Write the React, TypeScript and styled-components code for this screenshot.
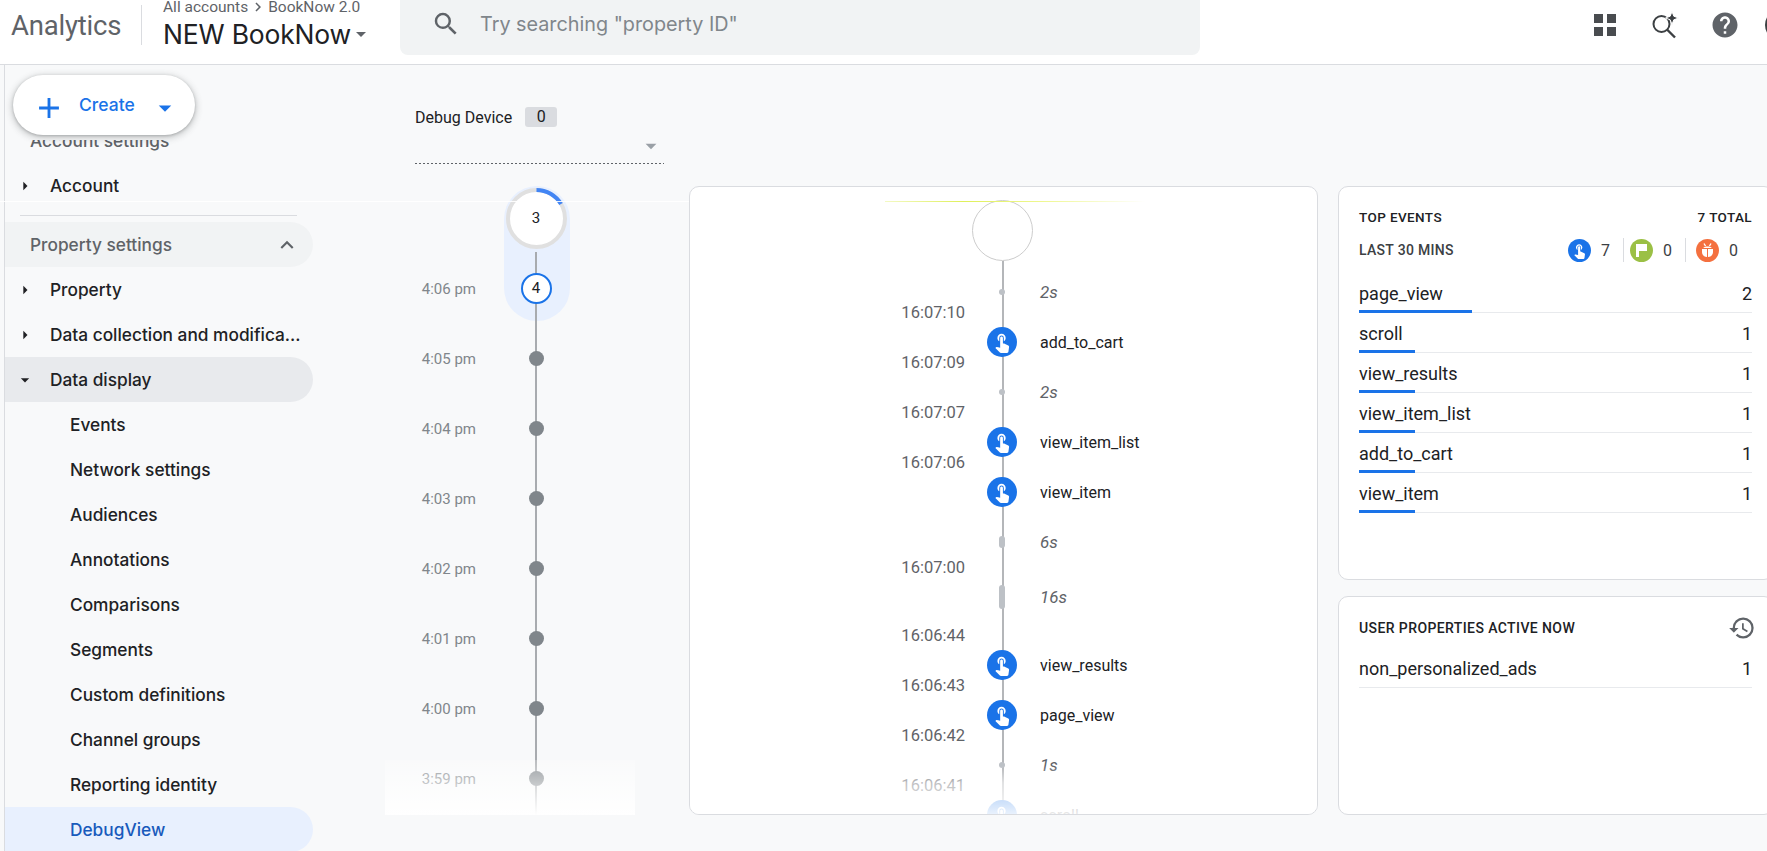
import styled, { createGlobalStyle } from 'styled-components'
import {
    MdAdd,
    MdArrowDropDown,
    MdArrowRight,
    MdChevronRight,
    MdExpandLess,
    MdHelp,
    MdHistory,
    MdSearch,
    MdTouchApp,
} from 'react-icons/md'

const GlobalStyle = createGlobalStyle`
    html, body {
        margin: 0;
        height: 100%;
        overflow: hidden;
        background: #f8f9fa;
        font-family: Roboto, "Liberation Sans", sans-serif;
        color: #202124;
    }
`

const Page = styled.div`
    position: relative;
    width: 1767px;
    height: 851px;
    overflow: hidden;
    background: #f8f9fa;
`

const Header = styled.header`
    display: flex;
    height: 64px;
    background: #fff;
    border-bottom: 1px solid #dadce0;
`

const Product = styled.div`
    width: 130px;
    padding-left: 11px;
    flex-shrink: 0;
    font-size: 27.5px;
    line-height: 52px;
    letter-spacing: -0.2px;
    color: #5f6368;
`

const HeaderDivider = styled.div`
    width: 1px;
    height: 40px;
    margin: 5px 21px 0 0;
    flex-shrink: 0;
    background: #dadce0;
`

const AccountBlock = styled.div`
    width: 237px;
    flex-shrink: 0;
`

const Crumbs = styled.div`
    display: flex;
    align-items: center;
    gap: 1px;
    height: 14px;
    font-size: 15.5px;
    line-height: 14px;
    color: #5f6368;
`

const PropertyName = styled.div`
    display: flex;
    align-items: center;
    margin-top: 5px;
    font-family: Inter, Roboto, sans-serif;
    font-size: 26.5px;
    line-height: 30px;
    letter-spacing: -0.2px;
    color: #202124;
`

const PropertyCaret = styled.span`
    display: flex;
    margin-left: -2px;
    color: #5f6368;
`

const SearchBox = styled.div`
    display: flex;
    align-items: center;
    gap: 19px;
    width: 800px;
    height: 55px;
    padding: 0 0 7px 31px;
    box-sizing: border-box;
    flex-shrink: 0;
    background: #f1f3f4;
    border-radius: 0 0 8px 8px;
    font-family: Inter, Roboto, sans-serif;
    font-size: 19.8px;
    color: #80868b;
`

const Actions = styled.div`
    display: flex;
    align-items: center;
    height: 50px;
    margin-left: 375px;
    flex-shrink: 0;
    color: #5f6368;
`

const ActionSlot = styled.span`
    display: flex;
    justify-content: center;
    width: 60px;
`

const Avatar = styled.div`
    width: 26px;
    height: 26px;
    margin-left: 10px;
    flex-shrink: 0;
    border: 3px solid #3c4043;
    border-radius: 50%;
`

const Body = styled.div`
    display: flex;
    height: 786px;
`

const Sidebar = styled.aside`
    position: relative;
    width: 315px;
    margin-left: 4px;
    flex-shrink: 0;
    border-left: 1px solid #dadce0;
`

const CreateArea = styled.div`
    height: 75px;
`

const CreateButton = styled.button`
    position: absolute;
    top: 10px;
    left: 8px;
    display: flex;
    align-items: center;
    width: 182px;
    height: 60px;
    padding: 0 0 0 19px;
    border: 0;
    border-radius: 30px;
    background: #fff;
    box-shadow: 0 2px 6px 2px rgba(60, 64, 67, 0.2), 0 1px 3px rgba(60, 64, 67, 0.3);
    font-family: Inter, Roboto, sans-serif;
    font-size: 17.5px;
    font-weight: 500;
    color: #1a73e8;
    z-index: 3;
`

const CreateLabel = styled.span`
    margin: -1px 15px 0 13px;
`

const CreateIcon = styled.span`
    display: flex;
    margin-top: 6px;
`

const NavScroll = styled.div`
    height: 711px;
    overflow: hidden;
`

const NavList = styled.div`
    margin-top: -22px;
`

const NavRow = styled.div<{ $tone?: 'section' | 'open' | 'active'; $indent: number; $muted?: boolean }>`
    display: flex;
    align-items: center;
    height: 45px;
    width: 308px;
    box-sizing: border-box;
    padding-left: ${(p) => p.$indent}px;
    border-radius: 0 23px 23px 0;
    font-family: Inter, Roboto, sans-serif;
    font-size: 17.3px;
    font-weight: 500;
    white-space: nowrap;
    color: ${(p) => (p.$tone === 'active' ? '#185abc' : p.$muted ? '#5f6368' : '#202124')};
    background: ${(p) =>
        p.$tone === 'section' ? '#f1f3f4' : p.$tone === 'open' ? '#e8eaed' : p.$tone === 'active' ? '#e8f0fe' : 'transparent'};
`

const NavCaret = styled.span`
    display: flex;
    width: 20px;
    margin: 0 15px 0 -1px;
    color: #202124;
`

const NavEnd = styled.span`
    display: flex;
    margin-left: auto;
    margin-right: 13px;
    color: #5f6368;
`

const NavDivider = styled.div`
    height: 1px;
    width: 277px;
    margin: 7px 0 6px 15px;
    background: #dadce0;
`

const Main = styled.main`
    display: flex;
    gap: 20px;
    flex: 1;
    min-width: 0;
`

const LeftColumn = styled.div`
    width: 284px;
    padding-left: 65px;
    flex-shrink: 0;
`

const DeviceBlock = styled.div`
    width: 249px;
    margin: 42px 0 19px 30px;
`

const DeviceLabel = styled.div`
    display: flex;
    align-items: center;
    gap: 13px;
    height: 20px;
    font-size: 16px;
`

const DeviceCount = styled.span`
    width: 32px;
    height: 20px;
    border-radius: 3px;
    background: #dadce0;
    text-align: center;
    line-height: 20px;
`

const DeviceSelect = styled.div`
    display: flex;
    justify-content: flex-end;
    align-items: center;
    height: 37px;
    padding-right: 0;
    color: #9aa0a6;
    background: repeating-linear-gradient(90deg, #5f6368 0 2px, transparent 2px 4px) bottom / 100% 1px no-repeat;
`

const Minutes = styled.div`
    position: relative;
    width: 250px;
    height: 632px;
    overflow: hidden;
`

const MinutePill = styled.div`
    position: absolute;
    top: 3px;
    left: 119px;
    width: 66px;
    height: 135px;
    border-radius: 33px;
    background: #e8f0fe;
`

const MinuteLine = styled.div`
    position: absolute;
    top: 69px;
    bottom: 0;
    left: 150px;
    width: 2px;
    background: #a8abaf;
`

const MinuteRow = styled.div`
    position: relative;
    display: grid;
    grid-template-columns: 91px 120px;
    align-items: center;
    height: 70px;
`

const MinuteLabel = styled.span`
    margin-top: 2px;
    text-align: right;
    font-size: 15px;
    color: #80868b;
`

const MinuteCell = styled.span`
    display: flex;
    justify-content: center;
`

const CurrentCircle = styled.span`
    display: flex;
    align-items: center;
    justify-content: center;
    position: relative;
    width: 61px;
    height: 61px;
    box-sizing: border-box;
    border: 4px solid #e0e0e0;
    border-radius: 50%;
    background: #fff;
    font-size: 15px;
`

const CircleProgress = styled.svg`
    position: absolute;
    top: -4px;
    left: -4px;
`

const CountCircle = styled.span`
    display: flex;
    align-items: center;
    justify-content: center;
    width: 31px;
    height: 31px;
    box-sizing: border-box;
    border: 2.5px solid #1a73e8;
    border-radius: 50%;
    background: #fff;
    font-size: 15px;
`

const MinuteDot = styled.span`
    width: 15px;
    height: 15px;
    border-radius: 50%;
    background: #80868b;
`

const MinuteFade = styled.div`
    position: absolute;
    left: 0;
    right: 0;
    bottom: 0;
    height: 55px;
    background: linear-gradient(rgba(255, 255, 255, 0.2), #fff 100%);
`

const StreamCard = styled.section`
    position: relative;
    width: 629px;
    height: 629px;
    margin-top: 121px;
    box-sizing: border-box;
    padding-top: 13px;
    flex-shrink: 0;
    overflow: hidden;
    background: #fff;
    border: 1px solid #dadce0;
    border-radius: 10px;
`

const StreamLine = styled.div`
    position: absolute;
    top: 74px;
    bottom: 0;
    left: 312px;
    width: 2px;
    background: #b4b6b9;
`

const StreamHead = styled.div`
    position: relative;
    width: 59px;
    height: 59px;
    margin-left: 282px;
    margin-bottom: 21px;
    border: 1px solid #ccc;
    border-radius: 50%;
    background: #fff;
`

const StreamRow = styled.div<{ $pitch: number }>`
    position: relative;
    display: grid;
    grid-template-columns: 275px 74px 1fr;
    height: ${(p) => p.$pitch}px;
`

const StreamCell = styled.div`
    display: flex;
    align-items: center;
    height: 20px;
`

const StreamTime = styled(StreamCell)`
    justify-content: flex-end;
    font-size: 16.5px;
    color: #5f6368;
`

const StreamCenter = styled(StreamCell)`
    justify-content: center;
`

const EventName = styled(StreamCell)`
    padding-left: 1px;
    font-size: 16px;
    color: #202124;
`

const GapText = styled(StreamCell)`
    padding-left: 1px;
    font-size: 17px;
    font-style: italic;
    color: #5f6368;
`

const GapMark = styled.span<{ $height: number }>`
    width: ${(p) => (p.$height > 6 ? 6 : 6)}px;
    height: ${(p) => p.$height}px;
    border-radius: 3px;
    background: #bdc1c6;
`

const EventBadge = styled.span`
    display: flex;
    align-items: center;
    justify-content: center;
    flex-shrink: 0;
    width: 30px;
    height: 30px;
    border-radius: 50%;
    background: #1a73e8;
    color: #fff;
`

const StreamFade = styled.div`
    position: absolute;
    left: 0;
    right: 0;
    bottom: 0;
    height: 48px;
    background: linear-gradient(rgba(255, 255, 255, 0), rgba(255, 255, 255, 0.6) 35%, rgba(255, 255, 255, 0.9));
`

const RightColumn = styled.div`
    display: flex;
    flex-direction: column;
    gap: 16px;
    width: 436px;
    margin-top: 121px;
    flex-shrink: 0;
`

const InfoCard = styled.section<{ $height: number; $top: number }>`
    height: ${(p) => p.$height}px;
    box-sizing: border-box;
    padding: ${(p) => p.$top}px 21px 0 20px;
    background: #fff;
    border: 1px solid #dadce0;
    border-radius: 10px;
`

const CardTitleRow = styled.div<{ $size: number }>`
    display: flex;
    justify-content: space-between;
    align-items: center;
    height: 20px;
    font-size: ${(p) => p.$size}px;
    font-weight: 500;
    letter-spacing: 0.4px;
    color: #202124;
`

const HistoryIcon = styled.span`
    display: flex;
    margin-right: -4px;
    color: #5f6368;
`

const SummaryRow = styled.div`
    display: flex;
    align-items: center;
    height: 30px;
    margin: 8px 0 9px;
    font-size: 14px;
    font-weight: 500;
    letter-spacing: 0.3px;
    color: #3c4043;
`

const Metrics = styled.div`
    display: flex;
    align-items: center;
    margin-left: auto;
    margin-right: 14px;
    font-size: 16px;
    font-weight: 400;
    letter-spacing: 0;
`

const Metric = styled.div<{ $left: number; $divider?: boolean }>`
    display: flex;
    align-items: center;
    gap: 10px;
    height: 24px;
    padding-left: ${(p) => p.$left}px;
    padding-right: ${(p) => (p.$divider ? 13 : 0)}px;
    border-right: ${(p) => (p.$divider ? '1px solid #dadce0' : 'none')};
`

const MetricBadge = styled.span<{ $bg: string }>`
    display: flex;
    align-items: center;
    justify-content: center;
    width: 23px;
    height: 23px;
    border-radius: 50%;
    background: ${(p) => p.$bg};
    color: #fff;
`

const StatRow = styled.div<{ $top?: number }>`
    position: relative;
    display: flex;
    justify-content: space-between;
    align-items: center;
    height: 39px;
    margin-top: ${(p) => p.$top ?? 0}px;
    margin-bottom: 1px;
    padding-top: 1px;
    box-sizing: border-box;
    border-bottom: 1px solid #e8eaed;
    font-size: 18px;
`

const StatBar = styled.span<{ $width: number }>`
    position: absolute;
    left: 0;
    bottom: -1px;
    width: ${(p) => p.$width}px;
    height: 3px;
    background: #1a73e8;
`

const ScanLine = styled.div`
    position: absolute;
    top: 201px;
    left: 0;
    width: 689px;
    height: 1px;
    background: rgba(255, 255, 255, 0.9);
    z-index: 4;
`

const GlitchLine = styled.div`
    position: absolute;
    top: 201px;
    left: 885px;
    width: 260px;
    height: 1px;
    background: linear-gradient(90deg, #f3f9c4, #dff05a 30%, #eef78f 60%, #fff);
    z-index: 4;
`

const TIMES = ['4:05 pm', '4:04 pm', '4:03 pm', '4:02 pm', '4:01 pm', '4:00 pm', '3:59 pm']

type StreamEntry =
    | { kind: 'gap'; label: string; mark: number; pitch: number }
    | { kind: 'time'; label: string; pitch: number }
    | { kind: 'event'; label: string; pitch: number }

const STREAM: StreamEntry[] = [
    { kind: 'gap', label: '2s', mark: 6, pitch: 20 },
    { kind: 'time', label: '16:07:10', pitch: 30 },
    { kind: 'event', label: 'add_to_cart', pitch: 20 },
    { kind: 'time', label: '16:07:09', pitch: 30 },
    { kind: 'gap', label: '2s', mark: 6, pitch: 20 },
    { kind: 'time', label: '16:07:07', pitch: 30 },
    { kind: 'event', label: 'view_item_list', pitch: 20 },
    { kind: 'time', label: '16:07:06', pitch: 30 },
    { kind: 'event', label: 'view_item', pitch: 50 },
    { kind: 'gap', label: '6s', mark: 12, pitch: 25 },
    { kind: 'time', label: '16:07:00', pitch: 30 },
    { kind: 'gap', label: '16s', mark: 24, pitch: 38 },
    { kind: 'time', label: '16:06:44', pitch: 30 },
    { kind: 'event', label: 'view_results', pitch: 20 },
    { kind: 'time', label: '16:06:43', pitch: 30 },
    { kind: 'event', label: 'page_view', pitch: 20 },
    { kind: 'time', label: '16:06:42', pitch: 30 },
    { kind: 'gap', label: '1s', mark: 6, pitch: 20 },
    { kind: 'time', label: '16:06:41', pitch: 30 },
    { kind: 'event', label: 'scroll', pitch: 20 },
]

const TOP_EVENTS = [
    { name: 'page_view', count: 2, bar: 113 },
    { name: 'scroll', count: 1, bar: 56 },
    { name: 'view_results', count: 1, bar: 56 },
    { name: 'view_item_list', count: 1, bar: 56 },
    { name: 'add_to_cart', count: 1, bar: 56 },
    { name: 'view_item', count: 1, bar: 56 },
]

const SUB_ITEMS = [
    'Events',
    'Network settings',
    'Audiences',
    'Annotations',
    'Comparisons',
    'Segments',
    'Custom definitions',
    'Channel groups',
    'Reporting identity',
]

function AppsIcon() {
    return (
        <svg width="24" height="24" viewBox="0 0 24 24" fill="#494c50">
            <rect x="1" y="1" width="9" height="9" />
            <rect x="14" y="1" width="9" height="9" />
            <rect x="1" y="14" width="9" height="9" />
            <rect x="14" y="14" width="9" height="9" />
        </svg>
    )
}

function SparkleSearchIcon() {
    return (
        <svg width="28" height="28" viewBox="0 0 28 28" fill="none">
            <circle cx="10.500" cy="13" r="8" stroke="#3c4043" strokeWidth="2" />
            <path d="M16 18.500 L24 26.500" stroke="#3c4043" strokeWidth="2.400" />
            <path d="M21 0.500 l1.800 4.700 4.700 1.800 -4.700 1.800 -1.800 4.700 -1.800 -4.700 -4.700 -1.800 4.700 -1.800z" fill="#3c4043" stroke="#fff" strokeWidth="1" />
        </svg>
    )
}

function FlagIcon() {
    return (
        <svg width="15" height="15" viewBox="0 0 15 15" fill="#fff">
            <path d="M2 1h11v7H5v6H2z" />
        </svg>
    )
}

function BugIcon() {
    return (
        <svg width="17" height="17" viewBox="0 0 17 17" fill="none">
            <path d="M3 7h5v8C5 15 3 12.500 3 10zM9 7h5v3c0 2.500-2 5-5 5z" fill="#fff" />
            <path d="M4.500 5.500C5.500 4 11.500 4 12.500 5.500V6h-8z" fill="#fff" />
            <path d="M5 1.500l1.500 2.500M12 1.500l-1.500 2.500" stroke="#fff" strokeWidth="1.400" />
        </svg>
    )
}

function StreamItem({ entry }: { entry: StreamEntry }) {
    if (entry.kind === 'time') {
        return (
            <StreamRow $pitch={entry.pitch}>
                <StreamTime>{entry.label}</StreamTime>
            </StreamRow>
        )
    }
    if (entry.kind === 'gap') {
        return (
            <StreamRow $pitch={entry.pitch}>
                <span />
                <StreamCenter>
                    <GapMark $height={entry.mark} />
                </StreamCenter>
                <GapText>{entry.label}</GapText>
            </StreamRow>
        )
    }
    return (
        <StreamRow $pitch={entry.pitch}>
            <span />
            <StreamCenter>
                <EventBadge>
                    <MdTouchApp size={22} />
                </EventBadge>
            </StreamCenter>
            <EventName>{entry.label}</EventName>
        </StreamRow>
    )
}

export default function App() {
    return (
        <Page>
            <GlobalStyle />
            <Header>
                <Product>Analytics</Product>
                <HeaderDivider />
                <AccountBlock>
                    <Crumbs>
                        All accounts
                        <MdChevronRight size={18} />
                        BookNow 2.0
                    </Crumbs>
                    <PropertyName>
                        NEW BookNow
                        <PropertyCaret><MdArrowDropDown size={24} /></PropertyCaret>
                    </PropertyName>
                </AccountBlock>
                <SearchBox>
                    <MdSearch size={30} color="#5f6368" />
                    Try searching "property ID"
                </SearchBox>
                <Actions>
                    <ActionSlot><AppsIcon /></ActionSlot>
                    <ActionSlot><SparkleSearchIcon /></ActionSlot>
                    <ActionSlot><MdHelp size={30} /></ActionSlot>
                    <Avatar />
                </Actions>
            </Header>
            <Body>
                <Sidebar>
                    <CreateArea />
                    <CreateButton>
                        <CreateIcon><MdAdd size={34} /></CreateIcon>
                        <CreateLabel>Create</CreateLabel>
                        <CreateIcon><MdArrowDropDown size={30} /></CreateIcon>
                    </CreateButton>
                    <NavScroll>
                        <NavList>
                            <NavRow $indent={25} $muted>Account settings</NavRow>
                            <NavRow $indent={11}>
                                <NavCaret><MdArrowRight size={20} /></NavCaret>
                                Account
                            </NavRow>
                            <NavDivider />
                            <NavRow $indent={25} $tone="section" $muted>
                                Property settings
                                <NavEnd><MdExpandLess size={26} /></NavEnd>
                            </NavRow>
                            <NavRow $indent={11}>
                                <NavCaret><MdArrowRight size={20} /></NavCaret>
                                Property
                            </NavRow>
                            <NavRow $indent={11}>
                                <NavCaret><MdArrowRight size={20} /></NavCaret>
                                Data collection and modifica...
                            </NavRow>
                            <NavRow $indent={11} $tone="open">
                                <NavCaret><MdArrowDropDown size={20} /></NavCaret>
                                Data display
                            </NavRow>
                            {SUB_ITEMS.map((item) => (
                                <NavRow key={item} $indent={65}>{item}</NavRow>
                            ))}
                            <NavRow $indent={65} $tone="active">DebugView</NavRow>
                        </NavList>
                    </NavScroll>
                </Sidebar>
                <Main>
                    <LeftColumn>
                        <DeviceBlock>
                            <DeviceLabel>
                                Debug Device
                                <DeviceCount>0</DeviceCount>
                            </DeviceLabel>
                            <DeviceSelect>
                                <MdArrowDropDown size={26} />
                            </DeviceSelect>
                        </DeviceBlock>
                        <Minutes>
                            <MinutePill />
                            <MinuteLine />
                            <MinuteRow>
                                <span />
                                <MinuteCell>
                                    <CurrentCircle>
                                        3
                                        <CircleProgress width="61" height="61" viewBox="0 0 61 61" fill="none">
                                            <path d="M30.500 2 A28.500 28.500 0 0 1 55 16" stroke="#4285f4" strokeWidth="4" />
                                        </CircleProgress>
                                    </CurrentCircle>
                                </MinuteCell>
                            </MinuteRow>
                            <MinuteRow>
                                <MinuteLabel>4:06 pm</MinuteLabel>
                                <MinuteCell>
                                    <CountCircle>4</CountCircle>
                                </MinuteCell>
                            </MinuteRow>
                            {TIMES.map((time) => (
                                <MinuteRow key={time}>
                                    <MinuteLabel>{time}</MinuteLabel>
                                    <MinuteCell>
                                        <MinuteDot />
                                    </MinuteCell>
                                </MinuteRow>
                            ))}
                            <MinuteFade />
                        </Minutes>
                    </LeftColumn>
                    <StreamCard>
                        <StreamLine />
                        <StreamHead />
                        {STREAM.map((entry, i) => (
                            <StreamItem key={i} entry={entry} />
                        ))}
                        <StreamFade />
                    </StreamCard>
                    <RightColumn>
                        <InfoCard $height={394} $top={20}>
                            <CardTitleRow $size={13.5}>
                                <span>TOP EVENTS</span>
                                <span>7 TOTAL</span>
                            </CardTitleRow>
                            <SummaryRow>
                                LAST 30 MINS
                                <Metrics>
                                    <Metric $left={0} $divider>
                                        <MetricBadge $bg="#1a73e8"><MdTouchApp size={17} /></MetricBadge>
                                        7
                                    </Metric>
                                    <Metric $left={6} $divider>
                                        <MetricBadge $bg="#9bc045"><FlagIcon /></MetricBadge>
                                        0
                                    </Metric>
                                    <Metric $left={10}>
                                        <MetricBadge $bg="#f4703f"><BugIcon /></MetricBadge>
                                        0
                                    </Metric>
                                </Metrics>
                            </SummaryRow>
                            {TOP_EVENTS.map((row) => (
                                <StatRow key={row.name}>
                                    {row.name}
                                    <span>{row.count}</span>
                                    <StatBar $width={row.bar} />
                                </StatRow>
                            ))}
                        </InfoCard>
                        <InfoCard $height={219} $top={21}>
                            <CardTitleRow $size={14}>
                                <span>USER PROPERTIES ACTIVE NOW</span>
                                <HistoryIcon><MdHistory size={28} /></HistoryIcon>
                            </CardTitleRow>
                            <StatRow $top={11}>
                                non_personalized_ads
                                <span>1</span>
                            </StatRow>
                        </InfoCard>
                    </RightColumn>
                </Main>
            </Body>
            <ScanLine />
            <GlitchLine />
        </Page>
    )
}
